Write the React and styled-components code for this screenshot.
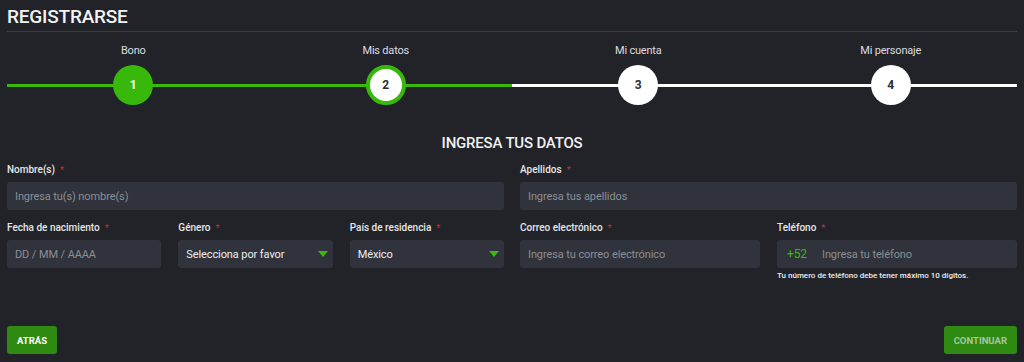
import React from 'react';
import styled, { createGlobalStyle } from 'styled-components';

const GlobalStyle = createGlobalStyle`
  body {
    margin: 0;
    background: #212328;
    font-family: Roboto, "Liberation Sans", sans-serif;
  }
`;

const Page = styled.div`
  width: 1024px;
  height: 362px;
  box-sizing: border-box;
  padding: 0 7px;
  display: flex;
  flex-direction: column;
  color: #e4e5e7;
`;

const Header = styled.h1`
  margin: 0;
  height: 32px;
  box-sizing: border-box;
  padding-top: 6px;
  font-size: 19px;
  font-weight: 500;
  letter-spacing: -0.2px;
  line-height: 22px;
  color: #f2f3f5;
  border-bottom: 1px solid #3a3d44;
`;

const Stepper = styled.div`
  display: flex;
  margin-top: 12px;
`;

const Step = styled.div`
  flex: 1;
  display: flex;
  flex-direction: column;
  align-items: center;
`;

const StepLabel = styled.div`
  font-size: 11px;
  line-height: 14px;
  letter-spacing: -0.2px;
  color: #dcdde0;
  margin-bottom: 7px;
`;

const Track = styled.div`
  position: relative;
  width: 100%;
  height: 40px;
  display: flex;
  justify-content: center;
  align-items: center;

  &::before {
    content: '';
    position: absolute;
    left: 0;
    right: 0;
    top: 19px;
    height: 3px;
    background: ${p => (p.done ? '#37b80a' : '#ffffff')};
  }
`;

const Circle = styled.div`
  position: relative;
  width: 40px;
  height: 40px;
  box-sizing: border-box;
  border-radius: 50%;
  display: flex;
  align-items: center;
  justify-content: center;
  font-size: 12px;
  font-weight: 700;
  background: ${p => (p.variant === 'filled' ? '#37b80a' : '#ffffff')};
  color: ${p => (p.variant === 'filled' ? '#ffffff' : '#2a2c31')};
  border: ${p => (p.variant === 'current' ? '4px solid #37b80a' : 'none')};
`;

const SectionTitle = styled.h2`
  margin: 29px 0 0;
  text-align: center;
  font-size: 15px;
  font-weight: 500;
  letter-spacing: -0.2px;
  line-height: 18px;
  color: #f0f1f3;
`;

const Row = styled.div`
  display: grid;
  grid-template-columns: 1fr 1fr;
  column-gap: 16px;
  margin-top: ${p => p.top}px;
`;

const Sub = styled.div`
  display: grid;
  grid-template-columns: repeat(${p => p.cols}, 1fr);
  column-gap: 17px;
`;

const Field = styled.div`
  display: flex;
  flex-direction: column;
`;

const Label = styled.label`
  font-size: 10px;
  font-weight: 500;
  line-height: 14px;
  color: #e6e7e9;
  margin-bottom: 5px;

  span {
    color: #c62b2b;
    margin-left: 5px;
    font-size: 9px;
  }
`;

const Box = styled.div`
  height: 28px;
  box-sizing: border-box;
  background: #30333b;
  border-radius: 3px;
  display: flex;
  align-items: center;
  padding: 0 8px;
  font-size: 11px;
  letter-spacing: -0.1px;
  color: ${p => (p.filled ? '#eceef0' : '#8b8e94')};
`;

const Arrow = styled.div`
  margin-left: auto;
  margin-right: -3px;
  width: 0;
  height: 0;
  border-left: 5px solid transparent;
  border-right: 5px solid transparent;
  border-top: 6px solid #3ab90f;
`;

const Prefix = styled.span`
  color: #3ab90f;
  font-size: 12px;
  margin: 0 15px 0 2px;
`;

const Hint = styled.div`
  margin-top: 3px;
  font-size: 8px;
  font-weight: 500;
  color: #eceef0;
`;

const Footer = styled.div`
  margin-top: auto;
  margin-bottom: 8px;
  display: flex;
  justify-content: space-between;
`;

const Button = styled.button`
  height: 28px;
  padding: 0 10px;
  border: none;
  border-radius: 3px;
  background: #2f8a12;
  font-family: inherit;
  font-size: 9.5px;
  font-weight: 700;
  color: ${p => (p.disabled ? '#a9c59f' : '#ffffff')};
`;

const steps = [
  { label: 'Bono', variant: 'filled', done: true },
  { label: 'Mis datos', variant: 'current', done: true },
  { label: 'Mi cuenta', variant: 'todo', done: false },
  { label: 'Mi personaje', variant: 'todo', done: false },
];

function App() {
  return (
    <Page>
      <GlobalStyle />
      <Header>REGISTRARSE</Header>
      <Stepper>
        {steps.map((s, i) => (
          <Step key={s.label}>
            <StepLabel>{s.label}</StepLabel>
            <Track done={s.done}>
              <Circle variant={s.variant}>{i + 1}</Circle>
            </Track>
          </Step>
        ))}
      </Stepper>
      <SectionTitle>INGRESA TUS DATOS</SectionTitle>
      <Row top={11}>
        <Field>
          <Label>Nombre(s)<span>*</span></Label>
          <Box>Ingresa tu(s) nombre(s)</Box>
        </Field>
        <Field>
          <Label>Apellidos<span>*</span></Label>
          <Box>Ingresa tus apellidos</Box>
        </Field>
      </Row>
      <Row top={11}>
        <Sub cols={3}>
          <Field>
            <Label>Fecha de nacimiento<span>*</span></Label>
            <Box>DD / MM / AAAA</Box>
          </Field>
          <Field>
            <Label>Género<span>*</span></Label>
            <Box filled>Selecciona por favor<Arrow /></Box>
          </Field>
          <Field>
            <Label>País de residencia<span>*</span></Label>
            <Box filled>México<Arrow /></Box>
          </Field>
        </Sub>
        <Sub cols={2}>
          <Field>
            <Label>Correo electrónico<span>*</span></Label>
            <Box>Ingresa tu correo electrónico</Box>
          </Field>
          <Field>
            <Label>Teléfono<span>*</span></Label>
            <Box><Prefix>+52</Prefix>Ingresa tu teléfono</Box>
            <Hint>Tu número de teléfono debe tener máximo 10 dígitos.</Hint>
          </Field>
        </Sub>
      </Row>
      <Footer>
        <Button>ATRÁS</Button>
        <Button disabled>CONTINUAR</Button>
      </Footer>
    </Page>
  );
}

export default App;
